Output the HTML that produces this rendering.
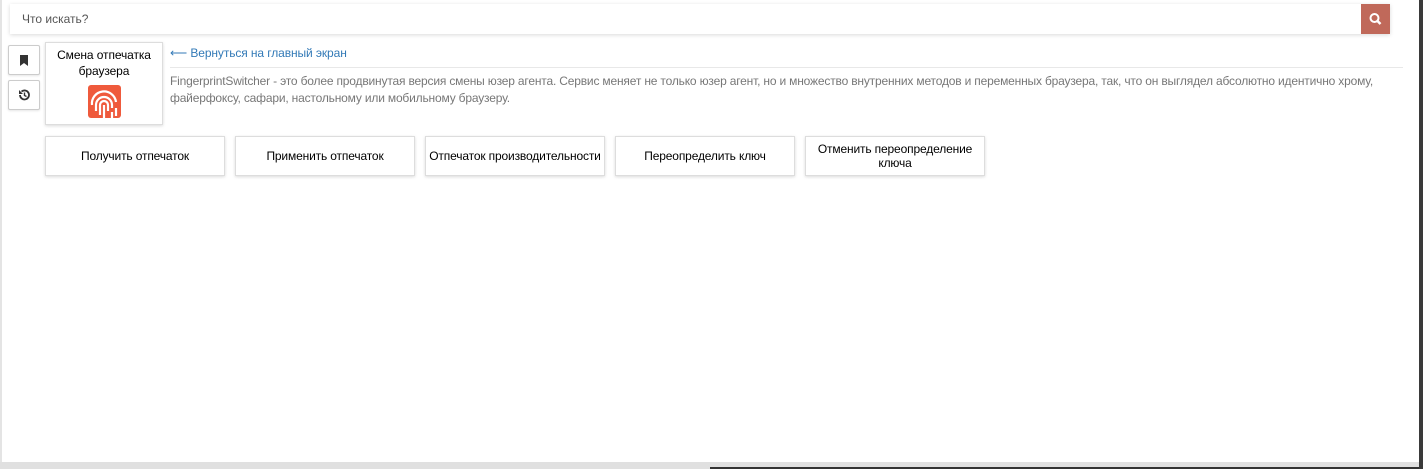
<!DOCTYPE html>
<html><head><meta charset="utf-8"><style>
body{margin:0;width:1423px;height:469px;background:#fff;font-family:"Liberation Sans",sans-serif;position:relative;overflow:hidden}
.abs{position:absolute}
.search{left:10px;top:4px;width:1380px;height:30px;background:#fff;box-shadow:0 1px 4px rgba(0,0,0,.15);}
.search span{position:absolute;left:12px;top:8px;font-size:12px;color:#555}
.sbtn{position:absolute;right:0;top:0;width:29px;height:30px;background:#c0695a}
.ib{width:30px;height:28px;border:1px solid #ccc;border-radius:2px;background:#fff;box-shadow:0 1px 2px rgba(0,0,0,.1)}
.card{left:45px;top:42px;width:118px;height:83px;border:1px solid #ddd;box-shadow:0 1px 3px rgba(0,0,0,.15);background:#fff;text-align:center;font-size:12px;line-height:16px;padding-top:4px;box-sizing:border-box;letter-spacing:-0.1px}
.btn{top:136px;width:180px;height:40px;border:1px solid #ddd;box-shadow:0 1px 3px rgba(0,0,0,.15);background:#fff;font-size:12px;display:flex;align-items:center;justify-content:center;text-align:center;line-height:14px;box-sizing:border-box;letter-spacing:-0.15px}
</style></head><body>
<div class="abs" style="left:0;top:0;width:2px;height:462px;background:#e4e4e4"></div>
<div class="abs search"><span>Что искать?</span><div class="sbtn"><svg width="29" height="30"><circle cx="13.5" cy="14" r="4" fill="none" stroke="#fff" stroke-width="2"/><line x1="16.5" y1="17" x2="19.5" y2="20" stroke="#fff" stroke-width="2.5"/></svg></div></div>
<div class="abs ib" style="left:8px;top:45px"><svg width="30" height="28"><path d="M11 9h8v11l-4-3-4 3z" fill="#333"/></svg></div>
<div class="abs ib" style="left:8px;top:80px"><svg width="30" height="28"><path d="M11 14a4.5 4.5 0 1 0 1.5-3.4" fill="none" stroke="#333" stroke-width="1.8"/><path d="M10 9v4h4" fill="#333"/><path d="M15.5 11.5v3l2 1" fill="none" stroke="#333" stroke-width="1.4"/></svg></div>
<div class="abs card">Смена отпечатка<br>браузера<br>
<svg width="33" height="33" style="margin-top:6px"><rect width="33" height="33" rx="3" fill="#ef5a3c"/><g fill="none" stroke="#fff" stroke-width="2.2"><path d="M4 20a12 12 0 0 1 24-3"/><path d="M8 26v-6a8 8 0 0 1 16 0v3"/><path d="M12 30v-10a4 4 0 0 1 8 0v6"/><path d="M16 20v13"/><path d="M24 27v6M28 23v8"/></g></svg></div>
<div class="abs" style="left:170px;top:46px;font-size:12px;color:#337ab7;letter-spacing:-0.1px">⟵ Вернуться на главный экран</div>
<div class="abs" style="left:170px;top:67px;width:1233px;height:1px;background:#e8e8e8"></div>
<div class="abs" style="left:170px;top:73px;width:1225px;font-size:12px;line-height:17px;color:#777;letter-spacing:-0.18px">FingerprintSwitcher - это более продвинутая версия смены юзер агента. Сервис меняет не только юзер агент, но и множество внутренних методов и переменных браузера, так, что он выглядел абсолютно идентично хрому, файерфоксу, сафари, настольному или мобильному браузеру.</div>
<div class="abs btn" style="left:45px">Получить отпечаток</div>
<div class="abs btn" style="left:235px">Применить отпечаток</div>
<div class="abs btn" style="left:425px">Отпечаток производительности</div>
<div class="abs btn" style="left:615px">Переопределить ключ</div>
<div class="abs btn" style="left:805px">Отменить переопределение<br>ключа</div>
<div class="abs" style="left:0;top:462px;width:1419px;height:7px;background:#e0e0e0"></div>
<div class="abs" style="left:710px;top:467px;width:713px;height:2px;background:#333"></div>
<div class="abs" style="left:1419px;top:0;width:4px;height:469px;background:#3a3a3a"></div>
</body></html>
